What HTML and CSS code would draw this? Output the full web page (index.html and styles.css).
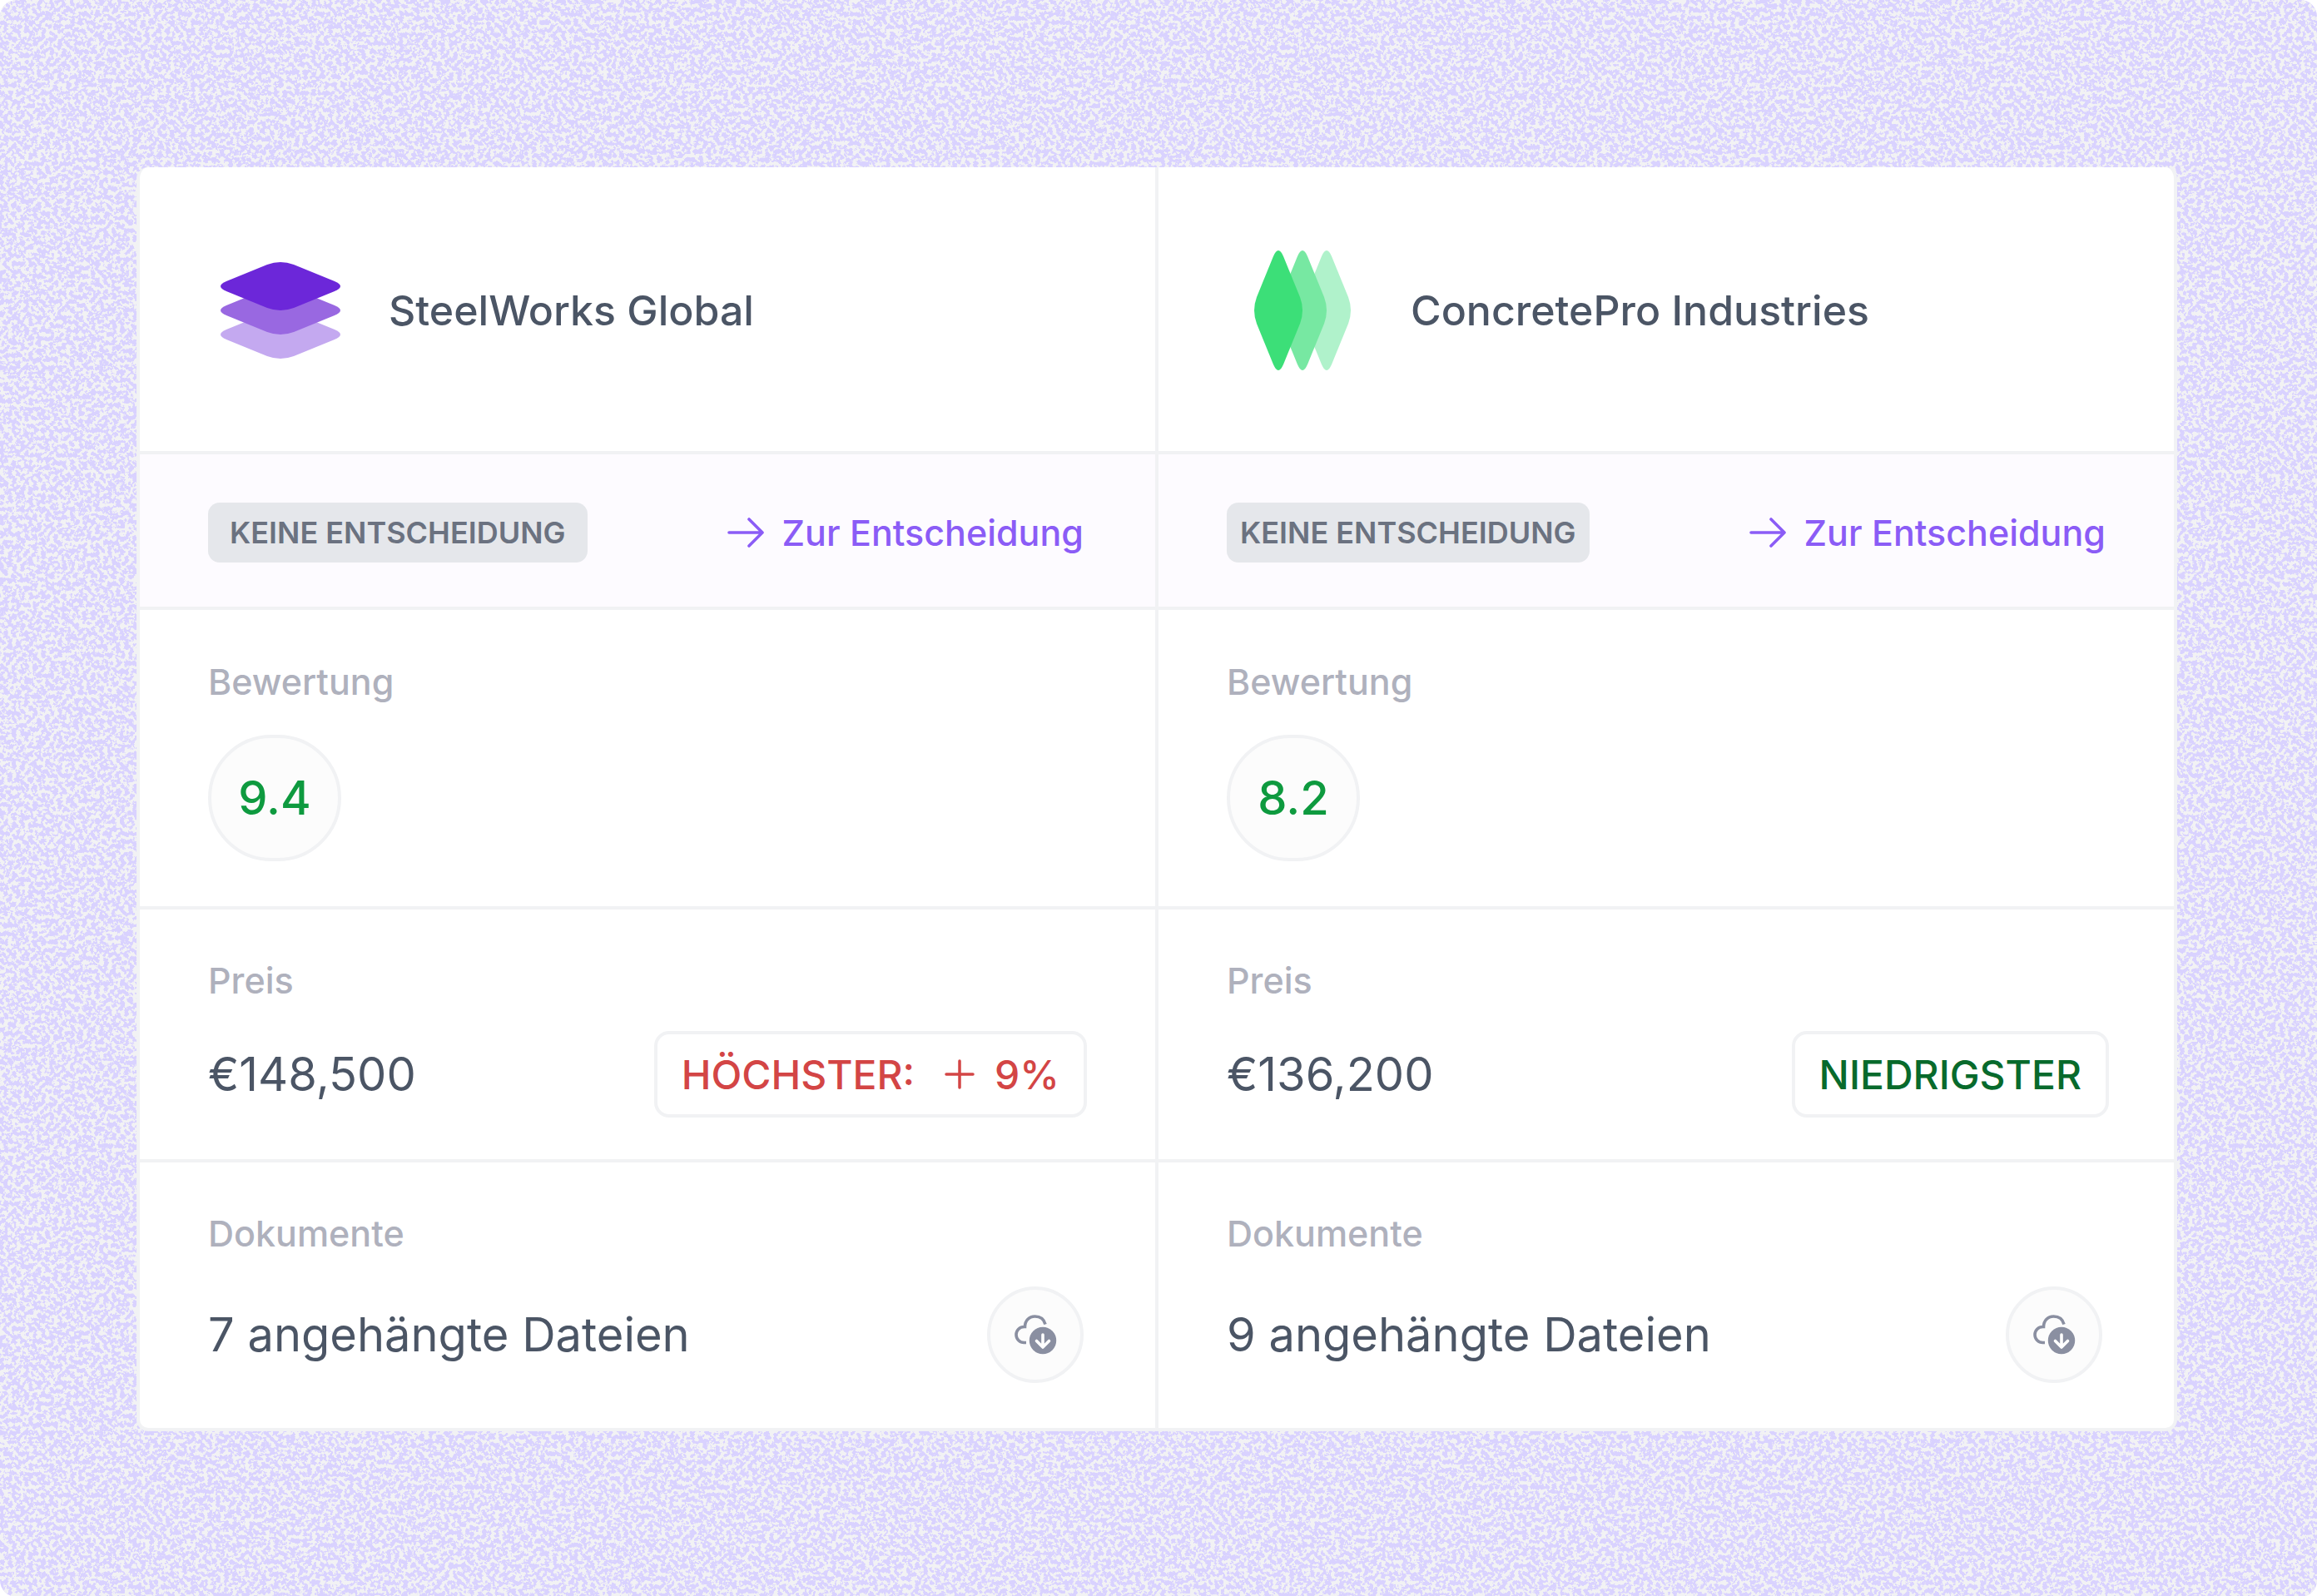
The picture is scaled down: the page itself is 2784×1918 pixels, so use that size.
FILE: index.html
```
<!DOCTYPE html>
<html lang="de">
<head>
    <meta charset="UTF-8">
    <meta name="viewport" content="width=device-width, initial-scale=1.0">
    <title>Angebotsvergleich</title>
    <link rel="stylesheet" href="styles.css">
</head>
<body>
    <!-- shared icons -->
    <svg class="sprite" aria-hidden="true">
        <symbol id="arrow" viewBox="0 0 44 36">
            <path d="M2 18h40M26 2l16 16-16 16" fill="none" stroke="currentColor" stroke-width="3.600" stroke-linecap="round" stroke-linejoin="round"/>
        </symbol>
        <symbol id="plus" viewBox="0 0 36 36">
            <path d="M18 2v32M2 18h32" fill="none" stroke="currentColor" stroke-width="3.500" stroke-linecap="round"/>
        </symbol>
        <symbol id="cloud" viewBox="0 0 52 48">
            <path d="M15 33.500h-2.500a9.500 9.500 0 0 1 0-19h1C13.500 7 18.500 2 25.500 2c6.500 0 11 3.500 12.500 9.500" fill="none" stroke="currentColor" stroke-width="3.600"/>
            <circle cx="35" cy="31" r="16.200" fill="currentColor"/>
            <path d="M35 24v14M27.500 31.500l7.500 7.500 7.500-7.500" fill="none" stroke="#fff" stroke-width="3.600" stroke-linecap="round" stroke-linejoin="round"/>
        </symbol>
    </svg>

    <main class="page">
        <svg class="grain" aria-hidden="true">
            <filter id="noise" x="0" y="0" width="100%" height="100%" color-interpolation-filters="sRGB">
                <feTurbulence type="fractalNoise" baseFrequency="0.2" numOctaves="3" seed="7"/>
                <feColorMatrix values="0 0 0 0 0.949  0 0 0 0 0.949  0 0 0 0 0.957  14 0 0 0 -6.700"/>
            </filter>
            <rect width="100%" height="100%" filter="url(#noise)"/>
        </svg>

        <div class="compare">
            <header class="cell vendor">
                <svg class="logo" viewBox="0 0 144 144" aria-hidden="true">
                    <path fill="#c4a9f0" d="M56 75Q72 69 88 75L137 95Q151 101 137 107L88 127Q72 133 56 127L7 107Q-7 101 7 95Z"/>
                    <path fill="#9968e1" d="M56 46Q72 40 88 46L137 66Q151 72 137 78L88 98Q72 104 56 98L7 78Q-7 72 7 66Z"/>
                    <path fill="#6c27d9" d="M56 17Q72 11 88 17L137 37Q151 43 137 49L88 69Q72 75 56 69L7 49Q-7 43 7 37Z"/>
                </svg>
                <h2>SteelWorks Global</h2>
            </header>
            <header class="cell vendor vendor-second">
                <svg class="logo" viewBox="0 0 144 144" aria-hidden="true">
                    <path fill="#b0f2cb" d="M75 56Q69 72 75 88L95 137Q101 151 107 137L127 88Q133 72 127 56L107 7Q101-7 95 7Z"/>
                    <path fill="#77e8a2" d="M46 56Q40 72 46 88L66 137Q72 151 78 137L98 88Q104 72 98 56L78 7Q72-7 66 7Z"/>
                    <path fill="#3cdf78" d="M17 56Q11 72 17 88L37 137Q43 151 49 137L69 88Q75 72 69 56L49 7Q43-7 37 7Z"/>
                </svg>
                <h2>ConcretePro Industries</h2>
            </header>

            <div class="cell decision">
                <span class="status">KEINE ENTSCHEIDUNG</span>
                <a class="link" href="#"><svg class="arrow" aria-hidden="true"><use href="#arrow"/></svg>Zur Entscheidung</a>
            </div>
            <div class="cell decision decision-second">
                <span class="status status-tight">KEINE ENTSCHEIDUNG</span>
                <a class="link" href="#"><svg class="arrow" aria-hidden="true"><use href="#arrow"/></svg>Zur Entscheidung</a>
            </div>

            <section class="cell rating">
                <h3>Bewertung</h3>
                <div class="score">9.4</div>
            </section>
            <section class="cell rating">
                <h3>Bewertung</h3>
                <div class="score">8.2</div>
            </section>

            <section class="cell price">
                <h3>Preis</h3>
                <div class="row">
                    <span class="value">€148,500</span>
                    <span class="tag high">HÖCHSTER: <svg class="plus" role="img" aria-label="plus"><use href="#plus"/></svg>9%</span>
                </div>
            </section>
            <section class="cell price price-second">
                <h3>Preis</h3>
                <div class="row">
                    <span class="value">€136,200</span>
                    <span class="tag low">NIEDRIGSTER</span>
                </div>
            </section>

            <section class="cell docs">
                <h3>Dokumente</h3>
                <div class="row">
                    <span class="value">7 angehängte Dateien</span>
                    <button class="download" type="button" aria-label="Dateien herunterladen"><svg class="cloud" aria-hidden="true"><use href="#cloud"/></svg></button>
                </div>
            </section>
            <section class="cell docs">
                <h3>Dokumente</h3>
                <div class="row">
                    <span class="value">9 angehängte Dateien</span>
                    <button class="download" type="button" aria-label="Dateien herunterladen"><svg class="cloud" aria-hidden="true"><use href="#cloud"/></svg></button>
                </div>
            </section>
        </div>
    </main>
</body>
</html>
```
FILE: styles.css
```
* {
    box-sizing: border-box;
}

body {
    margin: 0;
    background: #fff;
    font-family: Inter, "Liberation Sans", sans-serif;
    color: #4b5565;
}

h2, h3 {
    margin: 0;
    font-weight: 500;
}

.sprite {
    position: absolute;
    width: 0;
    height: 0;
}

.page {
    position: relative;
    min-height: 100vh;
    padding: 201px 168px 199px 164px;
    border-radius: 20px;
    background: #d9d2ff;
    overflow: hidden;
}

/* grain lies behind the card */
.grain {
    position: absolute;
    inset: 0;
    width: 100%;
    height: 100%;
}

/* the gaps show through as divider lines */
.compare {
    position: relative;
    display: grid;
    grid-template-columns: 1fr 1fr;
    gap: 4px;
    border: 4px solid #f1f2f4;
    border-top: 0;
    border-radius: 14px;
    background: #f1f2f4;
    overflow: hidden;
}

.cell {
    display: flex;
    flex-direction: column;
    gap: 36px;
    padding: 57px 82px 54px;
    background: #fff;
}

.vendor {
    flex-direction: row;
    align-items: center;
    gap: 58px;
    padding: 100px 97px 97px;
}

.vendor-second {
    padding-left: 101px;
}

.logo {
    width: 144px;
    height: 144px;
}

h2 {
    font-size: 50px;
    line-height: 60px;
}

.decision {
    flex-direction: row;
    align-items: center;
    justify-content: space-between;
    padding: 58px 86px 53px 82px;
    background: #fdfbff;
}

.decision-second {
    padding-right: 82px;
}

.status {
    padding: 0 26px;
    border-radius: 14px;
    background: #e5e7eb;
    color: #6b7280;
    font-size: 36px;
    font-weight: 600;
    line-height: 72px;
}

.status-tight {
    padding: 0 16px;
}

.link {
    display: flex;
    align-items: center;
    gap: 22px;
    color: #8b5cf6;
    font-size: 43px;
    font-weight: 500;
    line-height: 56px;
    text-decoration: none;
}

.arrow {
    width: 44px;
    height: 36px;
}

h3 {
    color: #afb1bd;
    font-size: 43px;
    line-height: 56px;
}

.rating {
    padding-top: 58px;
}

.score {
    display: flex;
    align-items: center;
    justify-content: center;
    width: 160px;
    height: 152px;
    border: 4px solid #f1f2f4;
    border-radius: 80px;
    background: #fcfcfc;
    color: #0e9a3f;
    font-size: 56px;
    font-weight: 500;
}

.price {
    gap: 33px;
    padding-bottom: 50px;
}

.price-second {
    padding-right: 78px;
}

.row {
    display: flex;
    align-items: center;
    justify-content: space-between;
}

.value {
    font-size: 56px;
    line-height: 68px;
}

.tag {
    display: flex;
    align-items: center;
    height: 104px;
    padding: 0 29px;
    border: 4px solid #f1f2f4;
    border-radius: 18px;
    font-size: 48px;
    font-weight: 500;
}

.high {
    color: #d34545;
}

.low {
    color: #086a2c;
}

.plus {
    width: 36px;
    height: 36px;
    margin: 0 24px 0 36px;
}

.download {
    display: flex;
    align-items: center;
    justify-content: center;
    width: 116px;
    height: 116px;
    margin-right: 4px;
    padding: 0;
    border: 4px solid #f1f2f4;
    border-radius: 50%;
    background: #fcfcfc;
    color: #8a8fa1;
}

.cloud {
    width: 52px;
    height: 48px;
}
```
